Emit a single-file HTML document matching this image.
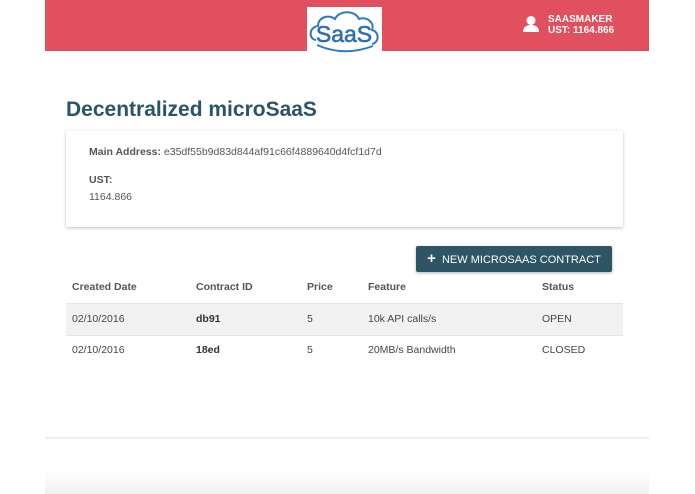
<!DOCTYPE html>
<html><head><style>
body{margin:0;width:695px;height:494px;background:#fff;font-family:"Liberation Sans",sans-serif;position:relative;overflow:hidden;color:#444}
.hdr{position:absolute;left:45px;top:0;width:604px;height:51px;background:#e0505e}
.logo{position:absolute;left:307px;top:7px;width:75px;height:47px;background:#fff}
.user{position:absolute;left:548px;top:14px;color:#fff;font-size:10px;font-weight:bold;line-height:11px}
h1{position:absolute;left:66px;top:98px;margin:0;font-size:21px;color:#2b5566;font-weight:bold}
.card{position:absolute;left:66px;top:131px;width:557px;height:96px;box-shadow:0 1px 3px rgba(0,0,0,.25);font-size:10.5px;color:#555}
.btn{position:absolute;left:416px;top:246px;width:196px;height:26px;background:#2d5564;border-radius:2px;box-shadow:0 1px 3px rgba(0,0,0,.3);color:#fff;font-size:11px;line-height:26px;text-align:center}
.row{position:absolute;left:66px;width:557px;height:31px;font-size:10.5px;line-height:31px}
.row span{position:absolute}
</style></head><body>
<div class="hdr"></div>
<div class="logo"><svg width="75" height="47" viewBox="0 0 75 47"><path d="M9 33 C1 32 2 20 11 19 C11 10 22 7 28 12 C32 3 48 3 52 12 C60 9 68 16 65 23 C73 25 72 36 65 37" fill="none" stroke="#2c7bc0" stroke-width="2"/><path d="M10 38 Q37 50 66 39" fill="none" stroke="#2c7bc0" stroke-width="2"/><text x="37" y="35" text-anchor="middle" font-family="Liberation Sans" font-size="23" fill="#2c6fb0" stroke="#2c6fb0" stroke-width="0.6">SaaS</text></svg></div>
<svg style="position:absolute;left:522px;top:15px" width="18" height="18" viewBox="0 0 18 18"><circle cx="9" cy="5.5" r="4.5" fill="#fff"/><path d="M1 17 Q1 10 9 10 Q17 10 17 17Z" fill="#fff"/></svg>
<div class="user">SAASMAKER<br>UST: 1164.866</div>
<h1>Decentralized microSaaS</h1>
<div class="card"><div style="position:absolute;left:23px;top:15px"><b>Main Address:</b> e35df55b9d83d844af91c66f4889640d4fcf1d7d</div><div style="position:absolute;left:23px;top:43px"><b>UST:</b></div><div style="position:absolute;left:23px;top:60px">1164.866</div></div>
<div class="btn"><b style="font-size:15px">+</b>&nbsp; NEW MICROSAAS CONTRACT</div>
<div class="row" style="top:272px;border-bottom:2px solid #e4e4e4;font-weight:bold;color:#555"><span style="left:6px">Created Date</span><span style="left:130px">Contract ID</span><span style="left:241px">Price</span><span style="left:302px">Feature</span><span style="left:476px">Status</span></div>
<div class="row" style="top:304px;background:#f2f2f2;border-bottom:1px solid #e4e4e4"><span style="left:6px">02/10/2016</span><span style="left:130px;font-weight:bold;color:#333">db91</span><span style="left:241px">5</span><span style="left:302px">10k API calls/s</span><span style="left:476px">OPEN</span></div>
<div class="row" style="top:335px"><span style="left:6px">02/10/2016</span><span style="left:130px;font-weight:bold;color:#333">18ed</span><span style="left:241px">5</span><span style="left:302px">20MB/s Bandwidth</span><span style="left:476px">CLOSED</span></div>
<div style="position:absolute;left:45px;top:437px;width:604px;height:2px;background:#eee"></div>
<div style="position:absolute;left:45px;top:470px;width:604px;height:24px;background:linear-gradient(#fff,#f0f0f0)"></div>
</body></html>
